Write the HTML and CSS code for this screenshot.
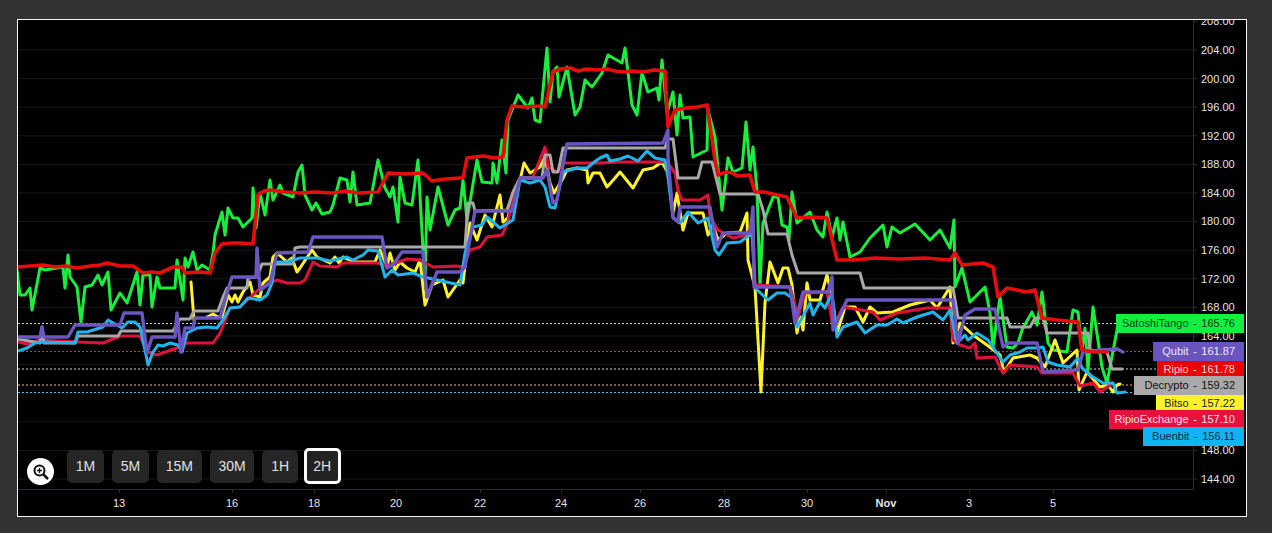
FILE: index.html
```html
<!DOCTYPE html>
<html lang="en">
<head>
<meta charset="utf-8">
<title>Price chart</title>
<link rel="stylesheet" href="styles.css">
</head>
<body>
<main class="chart">
  <svg class="plot" viewBox="18 20 1228 496" width="1228" height="496" xmlns="http://www.w3.org/2000/svg">
    <path class="grid" d="M18 50H1193M18 78.6H1193M18 107.2H1193M18 135.8H1193M18 164.4H1193M18 193H1193M18 221.6H1193M18 250.2H1193M18 278.8H1193M18 307.4H1193M18 336H1193M18 364.6H1193M18 393.2H1193M18 421.8H1193M18 450.4H1193M18 479H1193"/>
    <path class="axis" d="M1193.5 20V489.5H18M1193 21.4h4M1193 50h4M1193 78.6h4M1193 107.2h4M1193 135.8h4M1193 164.4h4M1193 193h4M1193 221.6h4M1193 250.2h4M1193 278.8h4M1193 307.4h4M1193 336h4M1193 450.4h4M1193 479h4M119.5 489v4M232.5 489v4M314.5 489v4M396.5 489v4M480.5 489v4M561.5 489v4M640.5 489v4M724.5 489v4M807.5 489v4M886.5 489v4M969.5 489v4M1053.5 489v4"/>

    <path class="dash dash-green" d="M18 323.5H1116"/>
    <path class="dash dash-plum" d="M18 351.5H1153"/>
    <path class="dash dash-gray" d="M18 369H1157"/>
    <path class="dash dash-orange" d="M18 385H1134"/>
    <path class="dash dash-blue" d="M18 392.5H1143"/>

    <polyline class="line green" points="17,270 20,295 25,295 30,288 32,310 40,268 45,270 63,267 65,288 68,255 70,277 77,287 81,322 85,287 92,285 98,275 102,285 108,272 111,310 120,293 127,303 137,272 140,305 143,275 150,275 152,307 157,277 160,288 175,288 177,260 183,300 185,258 188,267 193,252 197,270 202,265 210,270 213,253 215,235 222,212 225,235 228,208 233,218 238,218 243,227 252,218 253,188 256,228 260,193 265,215 270,180 273,200 280,185 283,193 293,197 298,172 302,165 305,195 312,210 316,203 322,214 330,212 333,205 340,178 347,180 350,202 353,172 357,205 370,203 378,160 385,188 390,197 393,187 398,222 400,177 405,203 412,205 418,160 425,285 427,197 430,230 438,187 448,225 455,210 460,208 463,180 467,220 477,160 482,182 492,183 493,163 497,183 502,140 506,173 508,120 518,95 528,108 532,98 535,120 540,122 547,48 550,102 553,72 557,67 559,97 567,67 575,115 580,107 585,80 592,87 597,80 602,73 608,55 622,63 625,48 632,105 637,115 642,73 648,92 657,88 659,100 662,60 667,113 673,92 677,135 680,95 683,118 690,117 693,157 707,150 708,110 715,137 722,210 728,158 733,172 742,168 746,122 750,170 753,147 757,190 760,285 763,223 773,197 778,197 782,225 787,227 789,240 792,192 797,223 803,218 810,212 817,230 823,237 827,212 832,237 837,218 840,240 843,222 850,257 860,252 870,238 883,225 887,247 892,227 900,233 915,224 930,240 940,230 950,248 954,220 955,287 962,268 970,302 985,287 990,313 993,347 1000,297 1007,347 1013,348 1018,343 1022,330 1032,312 1037,325 1042,292 1048,343 1053,350 1067,352 1073,310 1078,312 1082,350 1085,328 1088,370 1093,307 1102,367 1107,383 1117,330 1118,320"/>

    <polyline class="line yellow" points="191,282 194,320"/>
    <polyline class="line yellow" points="207,317 213,314 218,317 222,317 228,295 232,302 235,295 238,302 243,292 250,282 253,295 260,297 263,283 270,277 273,257 277,253 287,262 292,258 297,272 300,268 312,250 317,257 330,263 335,257 339,263 343,257 355,262 375,262 380,250 383,257 387,267 390,253 395,270 400,262 407,268 415,272 420,260 425,305 432,285 443,280 448,297 460,280 463,283 470,223 477,240 485,215 492,227 500,195 503,222 508,218 513,193 520,180 524,163 530,173 540,167 545,157 550,183 554,193 562,180 567,170 577,168 587,170 588,183 593,173 600,173 607,187 615,178 620,172 633,188 643,170 653,168 662,162 668,173 673,213 677,193 683,230 688,213 703,213 708,235 713,225 718,240 727,233 740,232 747,213 748,260 755,287 761,392 765,303 770,262 778,283 783,268 788,268 792,285 797,333 800,317 803,330 807,283 810,300 820,300 827,275 832,297 837,333 845,307 855,307 863,322 870,307 877,313 893,312 910,305 930,300 937,308 950,287 953,343 960,323 973,335 987,345 1000,355 1004,372 1013,358 1030,355 1037,358 1045,367 1055,340 1063,363 1077,350 1079,390 1087,372 1100,387 1108,385 1113,392 1117,385 1120,384"/>

    <polyline class="line crimson" points="18,342 27,344 40,340 77,342 103,343 120,336 140,336 147,352 157,355 177,348 187,343 213,343 220,333 230,308 240,307 258,290 268,284 277,280 287,283 300,283 305,280 313,262 320,266 337,267 343,263 378,263 387,266 407,259 420,260 433,267 457,266 463,267 470,250 480,247 487,237 502,235 508,222 513,195 520,178 533,177 545,147 548,167 557,172 563,163 583,163 600,163 617,162 633,162 650,162 667,162 675,173 678,190 682,200 700,200 708,195 710,217 718,230 733,238 747,235 753,223 755,285 760,285 790,287 795,305 798,317 805,293 827,292 833,327 843,307 873,312 880,320 897,313 927,308 950,308 953,340 960,345 970,348 975,343 977,358 995,357 1003,373 1010,365 1037,367 1042,373 1073,373 1080,386 1093,383 1100,392 1113,383"/>

    <polyline class="line gray" points="18,339 40,343 42,327 44,343 75,343 78,336 118,336 121,331 173,331 180,319 190,319 194,311 218,311 223,297 227,288 247,288 248,278 257,277 262,264 293,264 295,248 300,247 465,247 468,203 473,203 475,211 507,210 513,192 520,178 542,178 545,155 550,155 553,172 558,172 563,148 665,148 668,139 673,139 678,178 698,178 702,162 712,162 720,194 758,194 763,210 768,234 787,234 792,255 798,273 860,273 864,288 953,288 958,318 1007,318 1010,327 1030,327 1035,318 1043,318 1047,333 1088,333 1090,350 1107,352 1112,369 1122,369"/>

    <polyline class="line blue" points="18,351 27,348 35,343 42,342 75,343 78,332 87,332 103,327 108,320 115,324 122,328 128,322 135,322 140,327 145,350 148,365 153,352 158,345 163,346 170,343 178,345 182,352 187,333 197,328 207,327 217,328 223,320 230,308 240,307 248,298 260,300 267,295 272,283 275,262 287,262 300,258 317,258 330,261 347,257 353,260 363,255 368,250 378,251 385,277 392,270 398,275 413,273 423,277 428,278 460,285 465,253 473,227 482,225 487,217 500,228 513,220 520,180 530,183 540,180 545,187 550,207 555,208 563,172 577,168 587,168 597,160 600,158 607,155 610,161 620,159 628,156 638,161 647,151 655,158 665,160 668,177 673,218 680,223 688,212 698,223 708,218 715,250 719,255 727,243 740,242 747,237 752,233 755,288 768,300 777,293 785,293 792,298 797,327 802,318 810,303 813,315 820,302 825,308 832,293 837,337 843,327 857,322 865,333 877,325 887,325 897,319 903,323 917,317 933,312 943,320 950,310 957,343 965,335 968,340 977,333 988,340 1003,362 1010,355 1020,352 1027,348 1037,348 1043,347 1048,362 1057,365 1070,367 1078,358 1082,368 1093,377 1103,383 1113,383 1117,393 1125,392"/>

    <polyline class="line purple" points="18,337 40,337 42,327 44,337 68,337 75,325 120,325 124,313 142,313 147,353 152,337 175,337 177,313 181,352 185,328 193,328 195,318 220,318 227,293 232,277 256,277 257,248 260,290 270,283 277,253 308,252 313,237 382,237 387,268 393,265 402,252 423,252 427,297 437,272 460,272 465,267 475,211 512,211 520,178 543,178 547,170 553,203 557,200 563,165 567,144 663,143 668,130 668,157 673,217 678,222 680,207 710,207 717,247 723,233 750,233 753,207 754,287 790,287 795,323 803,292 828,292 832,277 833,330 847,300 953,300 958,343 965,315 975,309 995,309 1003,347 1008,343 1037,343 1043,372 1078,370 1083,352 1093,351 1100,350 1117,349 1123,352"/>

    <polyline class="line red" points="18,267 30,266 43,265 55,267 66,266 77,268 90,266 100,265 107,263 120,266 133,266 143,273 152,272 160,273 173,267 182,267 185,273 200,272 210,273 215,253 222,244 232,243 240,243 253,244 258,195 264,191 270,190 285,192 300,193 315,192 333,193 345,191 358,193 378,192 388,173 405,174 423,173 432,181 445,179 460,178 463,178 467,158 475,157 483,156 495,158 503,157 507,120 512,106 525,107 540,106 545,107 553,72 560,69 570,68 578,71 587,69 597,70 607,69 615,71 623,72 632,71 643,72 654,70 665,71 668,127 675,110 686,108 697,107 707,105 715,160 718,175 726,172 733,173 737,176 750,175 755,192 764,192 773,194 787,197 793,210 797,218 812,217 827,218 837,260 853,260 875,258 900,259 925,258 950,260 955,253 962,265 983,263 993,267 998,297 1007,288 1027,292 1035,290 1042,318 1057,320 1078,322 1082,350 1093,352 1107,352"/>

    <g class="ylabels">
      <text x="1201" y="25">208.00</text>
      <text x="1201" y="54">204.00</text>
      <text x="1201" y="83">200.00</text>
      <text x="1201" y="111">196.00</text>
      <text x="1201" y="140">192.00</text>
      <text x="1201" y="168">188.00</text>
      <text x="1201" y="197">184.00</text>
      <text x="1201" y="225">180.00</text>
      <text x="1201" y="254">176.00</text>
      <text x="1201" y="283">172.00</text>
      <text x="1201" y="311">168.00</text>
      <text x="1201" y="340">164.00</text>
      <text x="1201" y="454">148.00</text>
      <text x="1201" y="483">144.00</text>
    </g>
    <g class="xlabels">
      <text x="119" y="507">13</text>
      <text x="232" y="507">16</text>
      <text x="314" y="507">18</text>
      <text x="396" y="507">20</text>
      <text x="480" y="507">22</text>
      <text x="561" y="507">24</text>
      <text x="640" y="507">26</text>
      <text x="724" y="507">28</text>
      <text x="807" y="507">30</text>
      <text class="month" x="886" y="507">Nov</text>
      <text x="969" y="507">3</text>
      <text x="1053" y="507">5</text>
    </g>
  </svg>

  <div class="tag tag-satoshi">SatoshiTango - 165.76</div>
  <div class="tag tag-qubit">Qubit - 161.87</div>
  <div class="tag tag-ripio">Ripio - 161.78</div>
  <div class="tag tag-decrypto">Decrypto - 159.32</div>
  <div class="tag tag-bitso">Bitso - 157.22</div>
  <div class="tag tag-exchange">RipioExchange - 157.10</div>
  <div class="tag tag-buenbit">Buenbit - 156.11</div>

  <div class="toolbar">
    <button class="zoom" aria-label="Zoom">
      <svg viewBox="0 0 16 16" width="16" height="16" xmlns="http://www.w3.org/2000/svg">
        <circle class="zoom-ring" cx="6.5" cy="6.5" r="5"/>
        <path class="zoom-plus" d="M6.5 4v5M4 6.500h5"/>
        <path class="zoom-handle" d="M10.500 10.500L15 15"/>
      </svg>
    </button>
    <button class="range">1M</button>
    <button class="range">5M</button>
    <button class="range">15M</button>
    <button class="range">30M</button>
    <button class="range">1H</button>
    <button class="range active">2H</button>
  </div>
</main>
</body>
</html>
```

FILE: styles.css
```css
* { box-sizing: border-box; }
html, body { margin: 0; height: 100%; }
body {
  background: #333;
  padding: 19px 0 0 17px;
  overflow: hidden;
  font-family: "Liberation Sans", Arial, sans-serif;
}
.chart {
  position: relative;
  width: 1230px;
  height: 498px;
  background: #000;
  border: 1px solid #f4f4f4;
}
.plot { display: block; }
.grid { fill: none; stroke: #18181c; stroke-width: 1; }
.axis { fill: none; stroke: #2b2b36; stroke-width: 1; }
.line { fill: none; stroke-width: 3; stroke-linejoin: round; stroke-linecap: round; }
.green { stroke: #18ee3c; }
.yellow { stroke: #fff22a; }
.crimson { stroke: #e0103a; }
.gray { stroke: #a8a8a8; }
.blue { stroke: #1fb4ec; }
.purple { stroke: #6b55c0; stroke-width: 3.4; }
.red { stroke: #e80c0c; stroke-width: 3.6; }
.dash { fill: none; stroke-width: 1; stroke-dasharray: 2 2; }
.dash-green { stroke: #b8e0a8; }
.dash-plum { stroke: #c0306a; }
.dash-gray { stroke: #d8d8d8; }
.dash-orange { stroke: #ffb070; }
.dash-blue { stroke: #50c0f0; }
.ylabels text, .xlabels text { fill: #e4e4e4; font-size: 11px; font-family: "Liberation Sans", Arial, sans-serif; }
.xlabels text { text-anchor: middle; }
.xlabels .month { font-weight: 700; }
.tag {
  position: absolute;
  right: 2px;
  height: 19px;
  padding: 0 9px 0 0;
  font-size: 11px;
  line-height: 19px;
  text-align: right;
  word-spacing: 1.5px;
  white-space: nowrap;
}
.tag-satoshi { top: 294px; width: 128px; background: #10f040; color: #0c3a18; }
.tag-qubit { top: 322px; width: 91px; background: #6a55c0; color: #e8e8f8; }
.tag-ripio { top: 341px; width: 87px; height: 16px; line-height: 16px; background: #ee0000; color: #ffdcdc; }
.tag-decrypto { top: 356px; width: 110px; background: #a9a9a9; color: #111; }
.tag-bitso { top: 375px; width: 88px; height: 17px; line-height: 17px; background: #fff22a; color: #222; }
.tag-exchange { top: 390px; width: 135px; background: #e8103c; color: #ffe0e6; }
.tag-buenbit { top: 407px; width: 101px; background: #10b4f4; color: #08283c; }
.toolbar {
  position: absolute;
  left: 9px;
  top: 428px;
  height: 36px;
  display: flex;
  align-items: center;
  gap: 8px;
}
.zoom {
  align-self: flex-end;
  width: 27px;
  height: 27px;
  margin-right: 5px;
  margin-bottom: -1px;
  padding: 0;
  border: 0;
  border-radius: 50%;
  background: #fff;
  display: flex;
  align-items: center;
  justify-content: center;
}
.zoom-ring { fill: none; stroke: #111; stroke-width: 2; }
.zoom-plus { fill: none; stroke: #111; stroke-width: 1.300; }
.zoom-handle { fill: none; stroke: #111; stroke-width: 2.500; }
.range {
  height: 33px;
  padding: 0 8.75px;
  border: 0;
  border-radius: 5px;
  background: #262626;
  color: #e0e0e0;
  font-family: "Liberation Sans", Arial, sans-serif;
  font-size: 14px;
}
.range.active {
  height: 36px;
  margin-left: -2px;
  padding: 0 6.5px;
  border: 3px solid #fff;
  background: #222;
}
```
